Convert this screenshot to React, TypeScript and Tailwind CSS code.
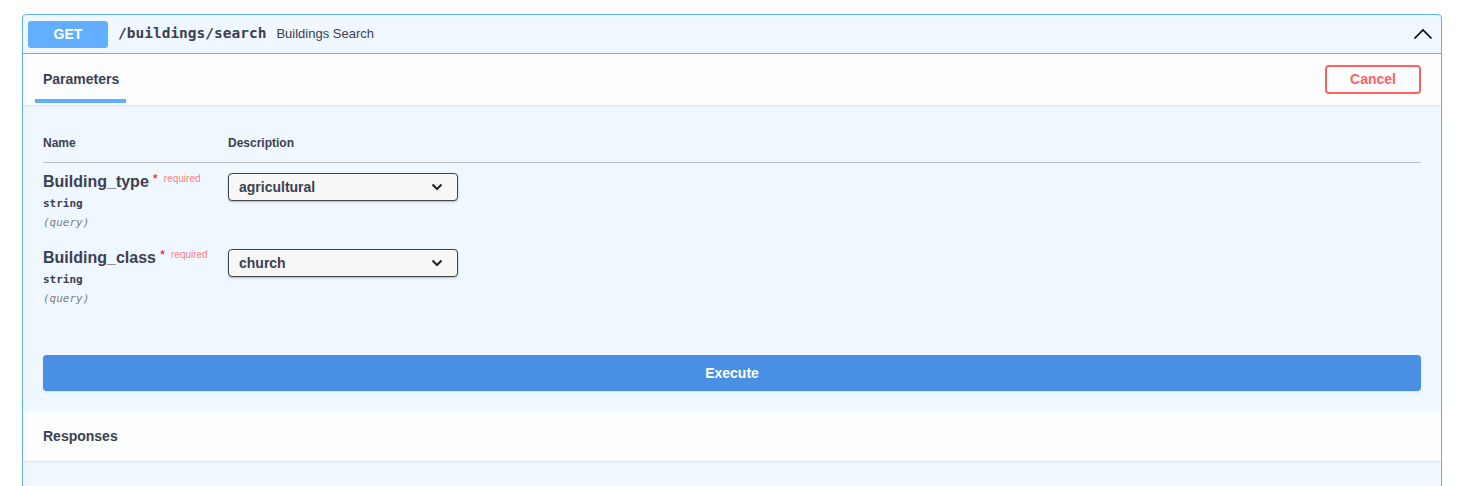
const sans = { fontFamily: '"Liberation Sans", Arial, sans-serif' };

function Chevron() {
	return (
		<svg width="12" height="8" viewBox="0 0 12 8" fill="none">
			<path d="M1.5 1.5 6 6l4.5-4.5" stroke="#222" strokeWidth="2" />
		</svg>
	);
}

function Param({ name, value }: { name: string; value: string }) {
	return (
		<div className="flex py-[9px]">
			<div className="w-[185px] text-[#3b4151]">
				<div className="flex items-start">
					<span className="text-[16px] font-bold leading-[18px]">{name}</span>
					<span className="ml-1 text-[#ff0000] text-[13px] leading-[12px]">*</span>
					<span className="ml-[6px] text-[10px] leading-[12px] text-[#ff6060]/80">required</span>
				</div>
				<div className="mt-[4px] text-[11px] font-semibold leading-[17px] font-['DejaVu_Sans_Mono',monospace]">string</div>
				<div className="mt-[2px] text-[11px] italic leading-[17px] text-[#808080] font-['DejaVu_Sans_Mono',monospace]">(query)</div>
			</div>
			<div className="flex h-[28px] w-[230px] items-center justify-between rounded-[4px] border border-[#41444e] bg-[#f7f7f7] pl-[10px] pr-[14px] shadow-[0_1px_2px_rgba(0,0,0,0.25)]">
				<span className="text-[14px] font-bold text-[#3b4151]">{value}</span>
				<Chevron />
			</div>
		</div>
	);
}

export default function App() {
	return (
		<div className="h-[486px] overflow-hidden bg-white pt-[14px]" style={sans}>
			<div className="ml-[22px] w-[1420px] rounded-[4px] border border-[#61affe] bg-[#eff7ff] pb-[60px]">
				{/* Заголовок операции */}
				<div className="flex h-[39px] items-center border-b border-[#61affe] px-[5px]">
					<span className="flex h-[27px] w-[80px] items-center justify-center rounded-[3px] bg-[#61affe] text-[14px] font-bold text-white">GET</span>
					<span className="ml-[10px] text-[14.5px] font-bold text-[#3b4151] font-['DejaVu_Sans_Mono',monospace]">/buildings/search</span>
					<span className="ml-[10px] text-[13px] text-[#3b4151]">Buildings Search</span>
					<svg className="ml-auto mr-[3px]" width="20" height="12" viewBox="0 0 20 12" fill="none">
						<path d="M1.5 10.5 10 2l8.5 8.5" stroke="#000" strokeWidth="1.6" />
					</svg>
				</div>

				{/* Вкладка Parameters */}
				<div className="flex h-[51px] items-stretch justify-between bg-[#fbfdff] px-[12px] shadow-[0_1px_2px_rgba(0,0,0,0.1)]">
					<div className="relative flex items-center px-[8px]">
						<span className="text-[14px] font-bold text-[#3b4151]">Parameters</span>
						<span className="absolute bottom-[2px] left-0 h-[4px] w-[91px] bg-[#61affe]" />
					</div>
					<div className="flex items-center pr-[8px]">
						<button className="h-[29px] w-[96px] rounded-[4px] border-2 border-[#ff6060] text-[14px] font-bold text-[#ff6060]">Cancel</button>
					</div>
				</div>

				{/* Таблица параметров */}
				<div className="px-[20px] pt-[29px]">
					<div className="flex border-b border-[#3b4151]/30 pb-[10px] text-[12px] font-bold text-[#3b4151]">
						<span className="w-[185px]">Name</span>
						<span>Description</span>
					</div>
					<div className="pt-[1px]">
						<Param name="Building_type" value="agricultural" />
						<Param name="Building_class" value="church" />
					</div>
					<button className="mt-[39px] h-[36px] w-full rounded-[4px] bg-[#4990e2] text-[14px] font-bold text-white shadow-[0_1px_2px_rgba(0,0,0,0.1)]">Execute</button>
				</div>

				{/* Ответы */}
				<div className="mt-[20px] flex h-[50px] items-center bg-[#fbfdff] px-[20px] shadow-[0_1px_2px_rgba(0,0,0,0.1)]">
					<span className="text-[14px] font-bold text-[#3b4151]">Responses</span>
				</div>
			</div>
		</div>
	);
}
